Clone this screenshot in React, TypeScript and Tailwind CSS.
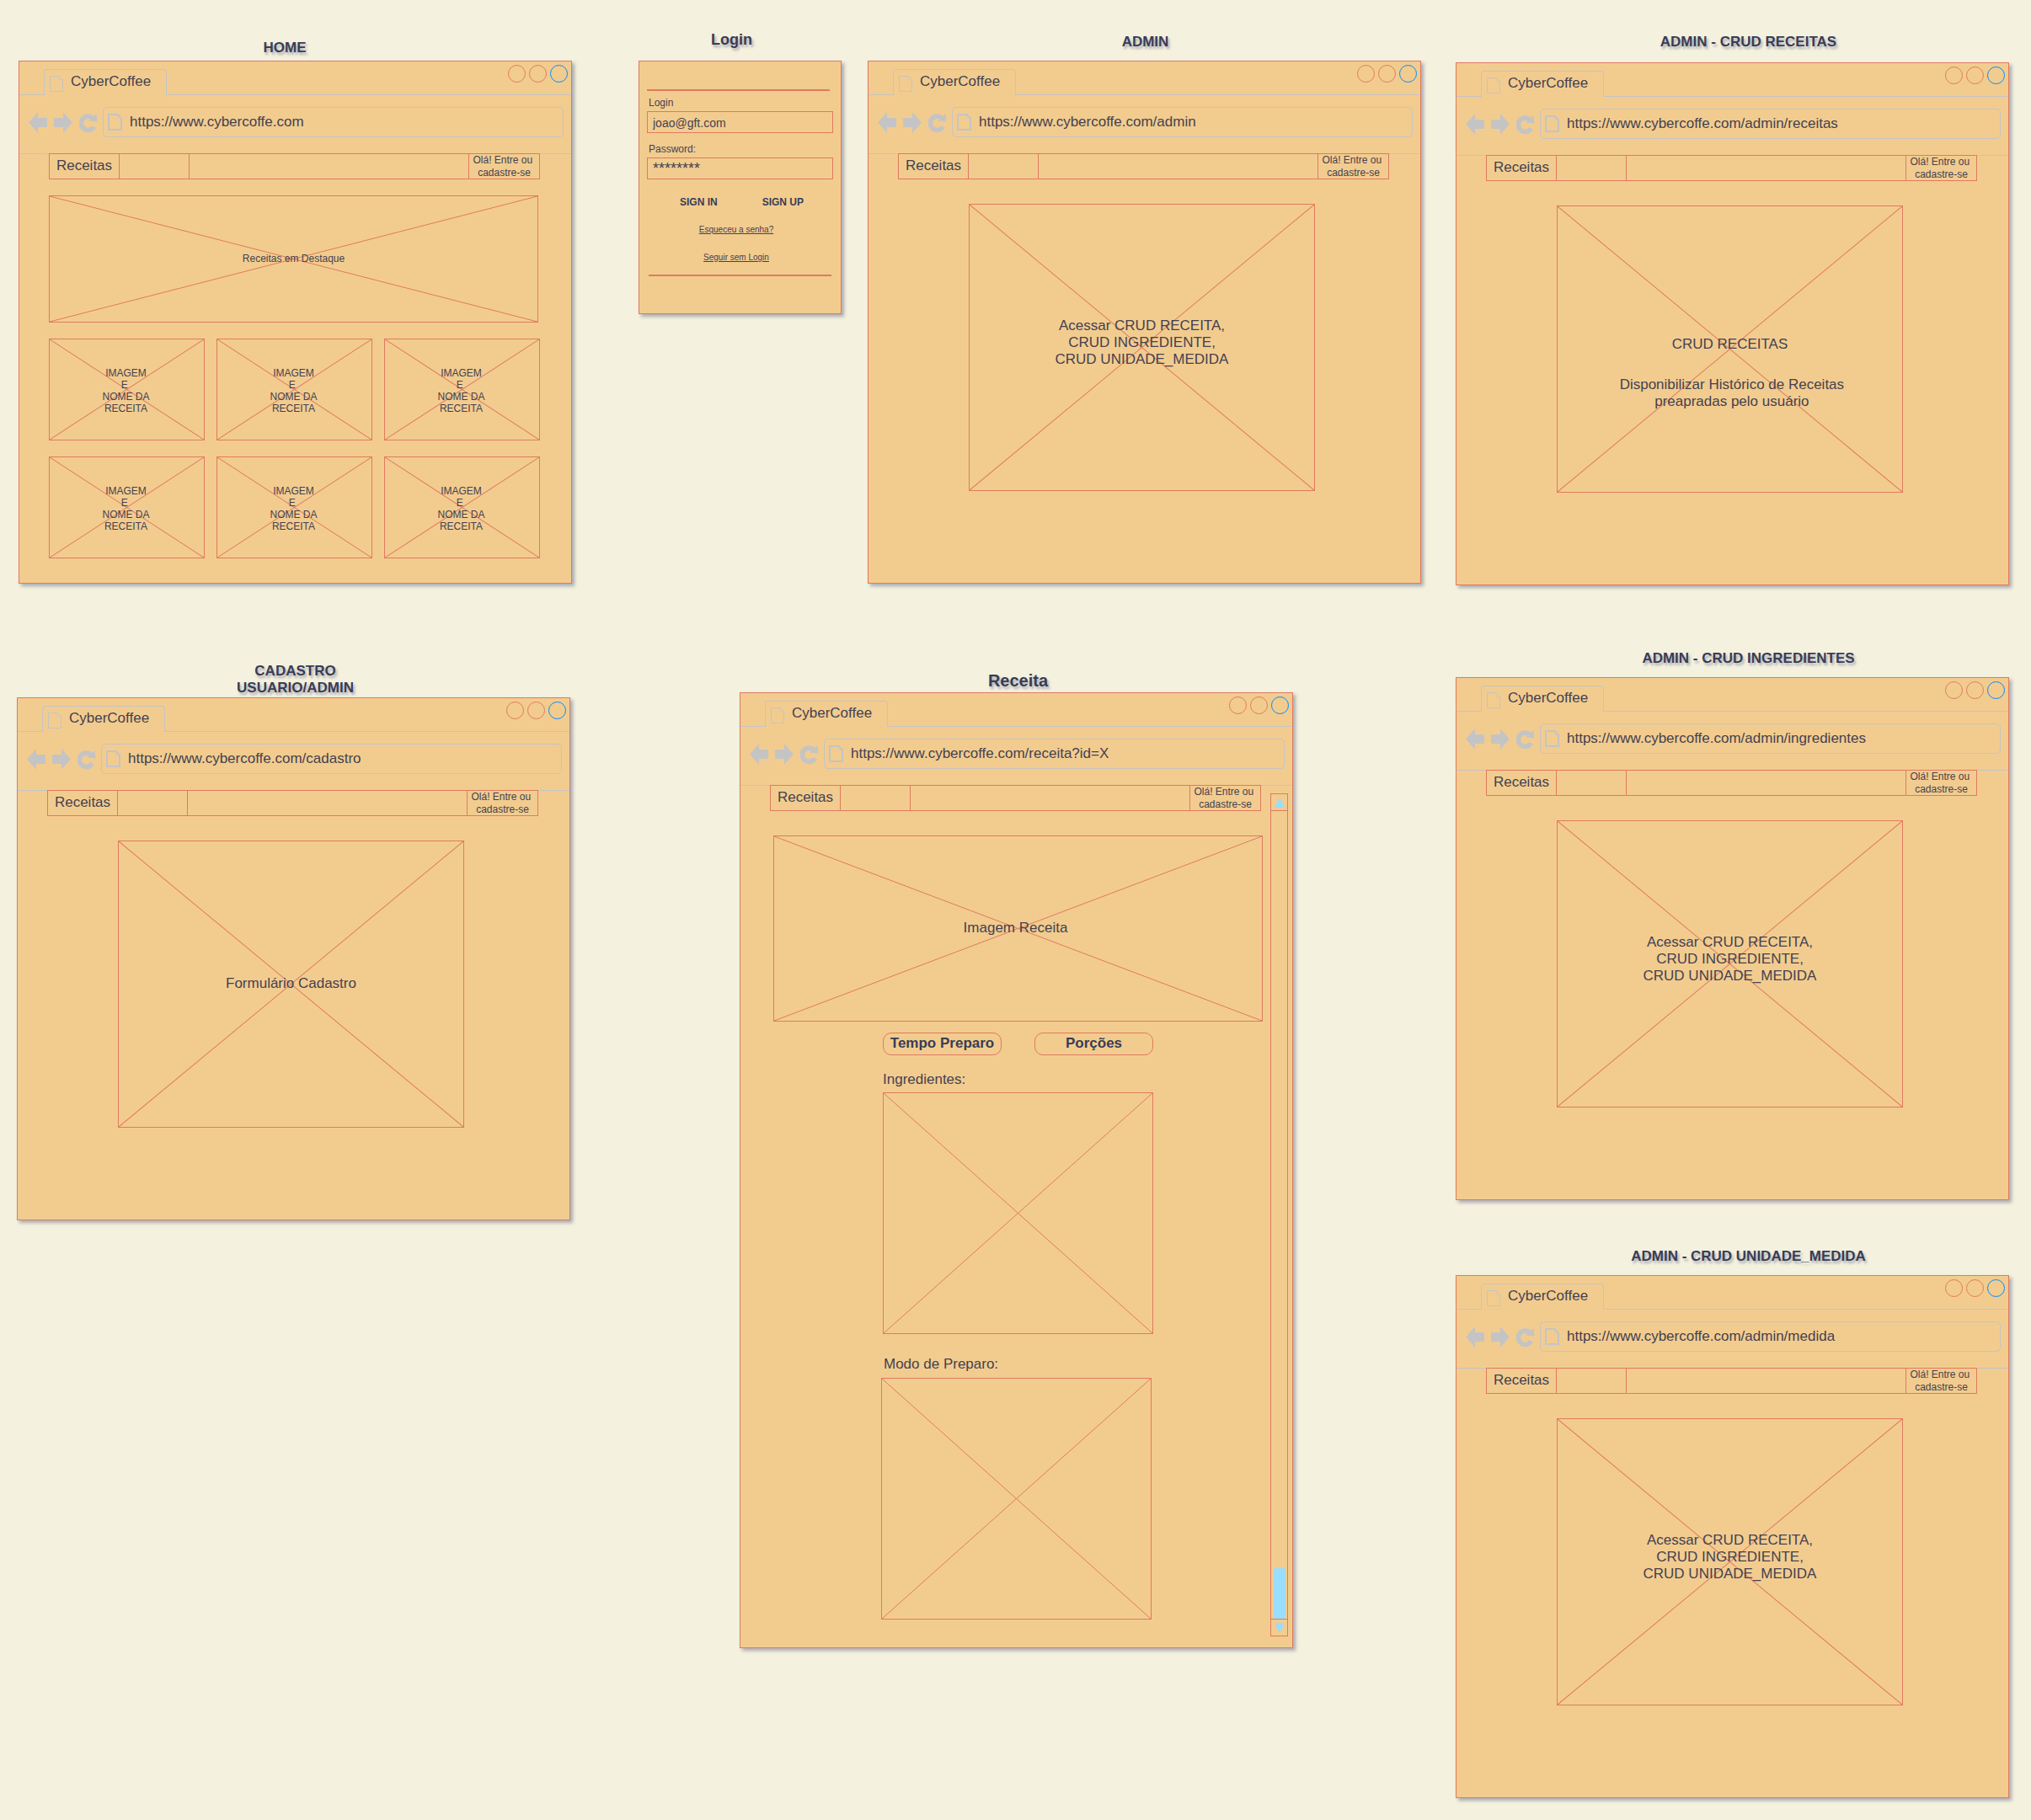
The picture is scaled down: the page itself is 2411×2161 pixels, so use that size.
import type { ReactNode } from "react";

const NBSP = "\u00a0";

/* ---------- drawings ---------- */

function PageIcon({ bold = false }: { bold?: boolean }) {
  return bold ? (
    <svg width="17" height="20" viewBox="0 0 17 20" fill="none" stroke="#c4c4c4" strokeWidth="2" aria-hidden="true">
      <path d="M1 1H11.5L16 5.5V19H1Z" />
      <path d="M11.5 1V5.5H16" strokeWidth="1" strokeOpacity="0.4" />
    </svg>
  ) : (
    <svg width="16" height="19" viewBox="0 0 16 19" fill="none" stroke="#c4c4c4" aria-hidden="true">
      <path d="M0.5 0.5H11L15.5 5V18.5H0.5Z" />
      <path d="M11 0.5V5H15.5" strokeOpacity="0.5" />
    </svg>
  );
}

function BackIcon() {
  return (
    <svg width="22" height="25" viewBox="0 0 22 25" fill="#c4c4c4" aria-hidden="true">
      <path d="M0 12.5L11 0V7H22V18H11V25Z" />
    </svg>
  );
}

function ForwardIcon() {
  return (
    <svg width="22" height="25" viewBox="0 0 22 25" fill="#c4c4c4" aria-hidden="true">
      <path d="M22 12.5L11 0V7H0V18H11V25Z" />
    </svg>
  );
}

function ReloadIcon() {
  return (
    <svg width="22" height="25" viewBox="0 0 22 25" aria-hidden="true">
      <path d="M17.6 17.4A8.2 8.2 0 1 1 15.6 6.8" fill="none" stroke="#c4c4c4" strokeWidth="5.8" />
      <path d="M20.5 2L21.5 11.5L11 10.5Z" fill="#c4c4c4" />
    </svg>
  );
}

/* ---------- shared pieces ---------- */

function Placeholder({ className = "", children }: { className?: string; children?: ReactNode }) {
  return (
    <div className={`relative flex flex-col items-center justify-center border border-[#e07a5f] text-center ${className}`}>
      <svg className="absolute inset-0 h-full w-full" viewBox="0 0 100 100" preserveAspectRatio="none" aria-hidden="true">
        <path
          d="M0 0L100 100M100 0L0 100"
          fill="none"
          stroke="#e07a5f"
          strokeWidth="1"
          vectorEffect="non-scaling-stroke"
        />
      </svg>
      {children && <div className="relative">{children}</div>}
    </div>
  );
}

function NavBar({ className }: { className: string }) {
  return (
    <nav className={`flex h-[31px] border border-[#e07a5f] ${className}`}>
      <a
        href="#receitas"
        className="flex w-[83px] items-center justify-center border-r border-[#e07a5f] pb-0.5 text-[17px] leading-5"
      >
        Receitas
      </a>
      <span className="w-[83px] border-r border-[#e07a5f]" />
      <span className="flex-1 border-r border-[#e07a5f]" />
      <a href="#entrar" className="flex w-[83px] flex-col items-center justify-center text-xs leading-[15px]">
        <span>Olá! Entre ou{NBSP}</span>
        <span>cadastre-se</span>
      </a>
    </nav>
  );
}

function BrowserWindow({ url, children }: { url: string; children: ReactNode }) {
  return (
    <div className="border border-[#e07a5f] bg-[#f2cc8f] text-[#444150] shadow-[3px_3px_4px_rgba(61,69,116,0.4)]">
      <div className="flex h-10">
        <span className="w-[29px] border-b border-[#c4c4c4]" />
        <div className="mt-[9px] flex w-[146px] items-center rounded-t-[4px] border-x border-t border-[#c4c4c4] pb-0.5 pl-1.5">
          <span className="pt-1">
            <PageIcon />
          </span>
          <span className="pl-[9px] text-[17px] leading-5">CyberCoffee</span>
        </div>
        <div className="flex flex-1 items-start justify-end gap-1 border-b border-[#c4c4c4] pt-1 pr-1">
          <button type="button" aria-label="Minimizar" className="size-[21px] rounded-full border border-[#e07a5f]" />
          <button type="button" aria-label="Maximizar" className="size-[21px] rounded-full border border-[#e07a5f]" />
          <button type="button" aria-label="Fechar" className="size-[21px] rounded-full border border-[#008cff]" />
        </div>
      </div>
      <div className="flex h-[70px] items-start border-b border-[#c4c4c4] pt-3.5 pr-[9px] pl-[11px]">
        <div className="flex gap-2 pt-1.5 pr-1.5">
          <button type="button" aria-label="Voltar">
            <BackIcon />
          </button>
          <button type="button" aria-label="Avançar">
            <ForwardIcon />
          </button>
          <button type="button" aria-label="Recarregar">
            <ReloadIcon />
          </button>
        </div>
        <label className="flex h-9 min-w-0 flex-1 items-center rounded-[5px] border border-[#c4c4c4] pl-[5px]">
          <PageIcon bold />
          <input
            type="text"
            aria-label="Endereço"
            defaultValue={url}
            className="min-w-0 flex-1 bg-transparent pl-[9px] text-[17px] leading-5 outline-none"
          />
        </label>
      </div>
      {children}
    </div>
  );
}

function Title({ className = "", children }: { className?: string; children: ReactNode }) {
  return (
    <h2 className={`text-center font-bold [text-shadow:2px_3px_3px_rgba(61,69,116,0.4)] ${className}`}>{children}</h2>
  );
}

function SinglePanelWindow({ url, panelClass, children }: { url: string; panelClass: string; children: ReactNode }) {
  return (
    <BrowserWindow url={url}>
      <NavBar className="-mt-px mr-[37px] ml-[35px]" />
      <div className="pt-[29px] pr-[125px] pb-[109px] pl-[119px]">
        <Placeholder className={`h-[341px] text-[17px] leading-5 ${panelClass}`}>{children}</Placeholder>
      </div>
    </BrowserWindow>
  );
}

function CrudLinks() {
  return (
    <p>
      Acessar CRUD RECEITA,
      <br />
      CRUD INGREDIENTE,
      <br />
      CRUD UNIDADE_MEDIDA
    </p>
  );
}

/* ---------- screens ---------- */

function HomeScreen() {
  return (
    <BrowserWindow url="https://www.cybercoffe.com">
      <NavBar className="-mt-px mr-[37px] ml-[35px]" />
      <div className="pt-[19px] pr-[37px] pb-[29px] pl-[35px]">
        <div className="pr-0.5">
          <Placeholder className="h-[151px] pb-0.5 text-xs leading-[14px]">Receitas em Destaque</Placeholder>
        </div>
        <div className="grid grid-cols-3 gap-x-3.5 gap-y-[19px] pt-[19px]">
          {[1, 2, 3, 4, 5, 6].map((n) => (
            <Placeholder key={n} className="h-[121px] pt-0.5 pr-0.5 text-xs leading-[14px]">
              <p>
                IMAGEM
                <br />E{NBSP}
                <br />
                NOME DA
                <br />
                RECEITA
              </p>
            </Placeholder>
          ))}
        </div>
      </div>
    </BrowserWindow>
  );
}

function LoginCard() {
  return (
    <form className="border border-[#e07a5f] bg-[#f2cc8f] pt-[33px] pr-[9px] pb-11 pl-[9px] text-[#444150] shadow-[3px_3px_4px_rgba(61,69,116,0.4)]">
      <div className="mr-1 h-0.5 bg-[#e07a5f]" />
      <label htmlFor="login" className="block pt-1.5 pb-0.5 pl-0.5 text-xs leading-4">
        Login
      </label>
      <input
        id="login"
        type="text"
        defaultValue="joao@gft.com"
        className="block h-[26px] w-full border border-[#e07a5f] bg-transparent pt-0.5 pl-1.5 text-sm leading-5 outline-none"
      />
      <label htmlFor="password" className="block pt-[11px] pb-0.5 pl-0.5 text-xs leading-4">
        Password:
      </label>
      <input
        id="password"
        type="text"
        defaultValue="********"
        className="block h-[26px] w-full border border-[#e07a5f] bg-transparent pl-1.5 text-lg leading-5 outline-none"
      />
      <div className="flex justify-center gap-[53px] pt-[19px] pl-1 text-xs leading-4 text-[#393c56]">
        <button type="button" className="font-bold">
          SIGN IN
        </button>
        <button type="button" className="font-bold">
          SIGN UP
        </button>
      </div>
      <div className="flex flex-col items-center gap-[17px] pt-[17px] pr-[9px] pb-3 text-[10px] leading-4">
        <a href="#senha" className="underline">
          Esqueceu a senha?
        </a>
        <a href="#seguir" className="underline">
          Seguir sem Login
        </a>
      </div>
      <div className="mr-0.5 ml-0.5 h-0.5 bg-[#e07a5f]" />
    </form>
  );
}

function ScrollRail() {
  return (
    <div className="mt-2.5 mr-[5px] mb-[13px] ml-[9px] flex w-[21px] flex-col border border-[#e07a5f]">
      <button
        type="button"
        aria-label="Rolar para cima"
        className="flex h-5 items-center justify-center border-b border-[#e07a5f]"
      >
        <svg width="12" height="12" viewBox="0 0 12 12" fill="#99ddff" aria-hidden="true">
          <path d="M6 0L12 12H0Z" />
        </svg>
      </button>
      <div className="flex flex-1 flex-col items-center justify-end">
        <div className="h-[60px] w-3.5 rounded-[3px] bg-[#99ddff]" />
      </div>
      <button
        type="button"
        aria-label="Rolar para baixo"
        className="flex h-5 items-center justify-center border-t border-[#e07a5f]"
      >
        <svg width="12" height="12" viewBox="0 0 12 12" fill="#99ddff" aria-hidden="true">
          <path d="M6 12L0 0H12Z" />
        </svg>
      </button>
    </div>
  );
}

function RecipeScreen() {
  return (
    <BrowserWindow url="https://www.cybercoffe.com/receita?id=X">
      <div className="-mt-px flex">
        <div className="flex-1 pb-[33px] text-[17px] leading-5">
          <NavBar className="mr-0.5 ml-[35px]" />
          <div className="pt-[29px] pl-[39px]">
            <Placeholder className="h-[221px] pr-1.5 pb-0.5">Imagem Receita</Placeholder>
          </div>
          <div className="flex justify-between pt-[13px] pr-[130px] pl-[169px] text-[#393c56]">
            <button
              type="button"
              className="h-[27px] w-[141px] rounded-[10px] border border-[#e07a5f] pb-0.5 leading-5 font-bold"
            >
              Tempo Preparo
            </button>
            <button
              type="button"
              className="h-[27px] w-[141px] rounded-[10px] border border-[#e07a5f] pb-0.5 leading-5 font-bold"
            >
              Porções
            </button>
          </div>
          <div className="pt-[19px] pr-[130px] pl-[169px]">
            <h3 className="pb-[5px]">Ingredientes:</h3>
            <Placeholder className="h-[287px]" />
          </div>
          <div className="pt-[26px] pr-[132px] pl-[167px]">
            <h3 className="pb-1.5 pl-[3px]">Modo de Preparo:</h3>
            <Placeholder className="h-[287px]" />
          </div>
        </div>
        <ScrollRail />
      </div>
    </BrowserWindow>
  );
}

export default function App() {
  return (
    <main className="grid min-h-screen grid-cols-[679fr_1029fr_703fr] items-start bg-[#f4f1de] font-['Liberation_Sans',Arial,sans-serif] text-[#393c56]">
      <div>
        <section className="pt-[47px] pl-[22px]">
          <Title className="pr-[25px] pb-[5px] text-[17px] leading-5">HOME</Title>
          <HomeScreen />
        </section>
        <section className="pt-[94px] pr-0.5 pl-5">
          <Title className="pb-px pl-1 text-[17px] leading-5">
            CADASTRO
            <br />
            USUARIO/ADMIN
          </Title>
          <SinglePanelWindow url="https://www.cybercoffe.com/cadastro" panelClass="pb-0.5">
            Formulário Cadastro
          </SinglePanelWindow>
        </section>
      </div>

      <div className="pr-[21px] pl-[79px]">
        <div className="flex items-start gap-[31px]">
          <section className="flex-[241] pt-[37px]">
            <Title className="pr-5 pb-[15px] text-lg leading-5">Login</Title>
            <LoginCard />
          </section>
          <section className="flex-[657] pt-10">
            <Title className="pb-3 pl-0.5 text-[17px] leading-5">ADMIN</Title>
            <SinglePanelWindow url="https://www.cybercoffe.com/admin" panelClass="pb-3">
              <CrudLinks />
            </SinglePanelWindow>
          </section>
        </div>
        <section className="pt-[103px] pr-[152px] pl-[120px]">
          <Title className="pb-0.5 pl-1 text-xl leading-6">Receita</Title>
          <RecipeScreen />
        </section>
      </div>

      <div className="pr-[26px] pb-[26px] pl-5">
        <section className="pt-10">
          <Title className="pb-3.5 pl-[38px] text-[17px] leading-5">ADMIN - CRUD RECEITAS</Title>
          <SinglePanelWindow url="https://www.cybercoffe.com/admin/receitas" panelClass="pt-14">
            <p className="pb-7">CRUD RECEITAS</p>
            <p>
              {NBSP}Disponibilizar Histórico de Receitas
              <br />
              {NBSP}preapradas pelo usuário
            </p>
          </SinglePanelWindow>
        </section>
        <section className="pt-[77px]">
          <Title className="pb-3 pl-[38px] text-[17px] leading-5">ADMIN - CRUD INGREDIENTES</Title>
          <SinglePanelWindow url="https://www.cybercoffe.com/admin/ingredientes" panelClass="pb-3">
            <CrudLinks />
          </SinglePanelWindow>
        </section>
        <section className="pt-[57px]">
          <Title className="pb-3 pl-[38px] text-[17px] leading-5">ADMIN - CRUD UNIDADE_MEDIDA</Title>
          <SinglePanelWindow url="https://www.cybercoffe.com/admin/medida" panelClass="pb-3">
            <CrudLinks />
          </SinglePanelWindow>
        </section>
      </div>
    </main>
  );
}
